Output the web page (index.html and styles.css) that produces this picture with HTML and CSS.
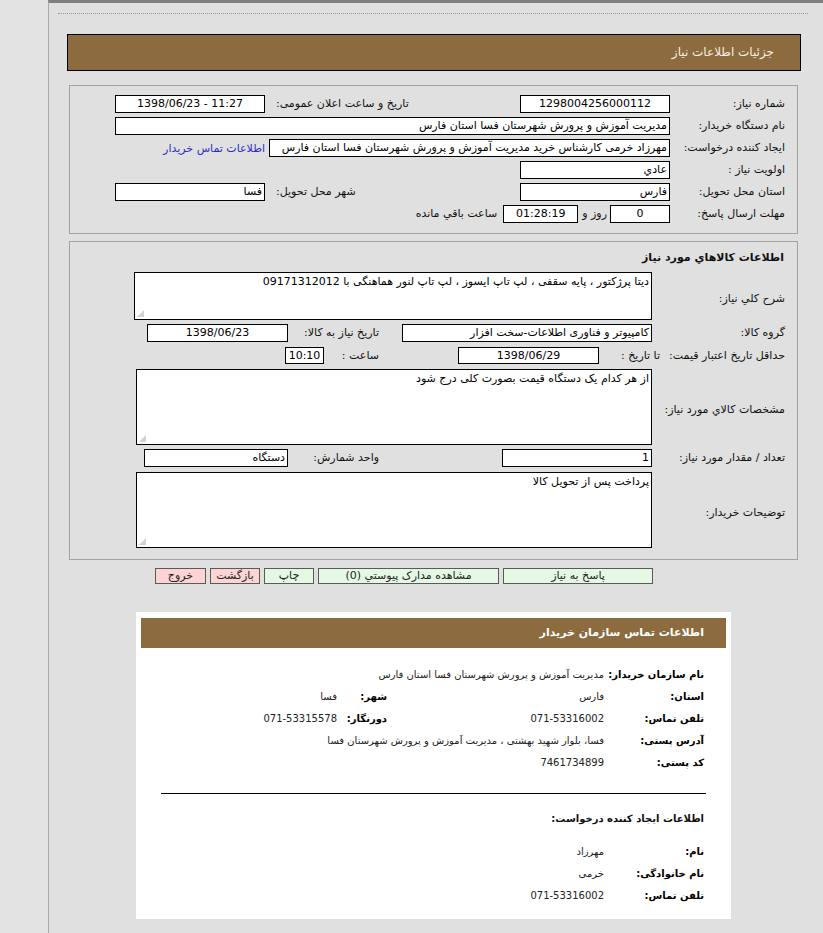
FILE: index.html
```html
<!DOCTYPE html>
<html lang="fa" dir="rtl">
<head>
<meta charset="utf-8">
<title>جزئیات اطلاعات نیاز</title>
<link rel="stylesheet" href="styles.css">
</head>
<body>
<div class="page">
  <div class="dots"></div>
  <div class="hdr">جزئیات اطلاعات نیاز</div>

  <div class="box box1">
    <div class="row">
      <span class="lbl c1">شماره نیاز:</span>
      <span class="inp w150 ctr">1298004256000112</span>
      <span class="lbl c3">تاریخ و ساعت اعلان عمومی:</span>
      <span class="inp w150 ctr ltr">1398/06/23 - 11:27</span>
    </div>
    <div class="row">
      <span class="lbl c1">نام دستگاه خریدار:</span>
      <span class="inp w555">مدیریت آموزش و پرورش شهرستان فسا استان فارس</span>
    </div>
    <div class="row">
      <span class="lbl c1">ایجاد کننده درخواست:</span>
      <span class="inp w401">مهرزاد خرمی کارشناس خرید مدیریت آموزش و پرورش شهرستان فسا استان فارس</span>
      <a class="link" href="#">اطلاعات تماس خریدار</a>
    </div>
    <div class="row">
      <span class="lbl c1">اولویت نیاز :</span>
      <span class="inp w150">عادي</span>
    </div>
    <div class="row">
      <span class="lbl c1">استان محل تحویل:</span>
      <span class="inp w150">فارس</span>
      <span class="lbl c3">شهر محل تحویل:</span>
      <span class="inp w150">فسا</span>
    </div>
    <div class="row">
      <span class="lbl c1">مهلت ارسال پاسخ:</span>
      <span class="inp w60 ctr">0</span>
      <span class="lbl t-day">روز و</span>
      <span class="inp w75 ctr">01:28:19</span>
      <span class="lbl t-rem">ساعت باقي مانده</span>
    </div>
  </div>

  <div class="box box2">
    <div class="title">اطلاعات کالاهاي مورد نیاز</div>
    <div class="row tall">
      <span class="lbl d1 mid">شرح کلي نیاز:</span>
      <div class="area w518 h48">دیتا پرژکتور ، پایه سقفی ، لپ تاپ ایسوز ، لپ تاپ لنور هماهنگی با 09171312012<span class="grip"></span></div>
    </div>
    <div class="row r18">
      <span class="lbl d1">گروه کالا:</span>
      <span class="d2"><span class="inp w250">کامپیوتر و فناوری اطلاعات-سخت افزار</span></span>
      <span class="lbl d3">تاریخ نیاز به کالا:</span>
      <span class="inp w141 ctr">1398/06/23</span>
    </div>
    <div class="row r17">
      <span class="lbl d1 pair"><span>حداقل تاریخ اعتبار قیمت:</span><span>تا تاریخ :</span></span>
      <span class="d2 off53"><span class="inp w141 h17 ctr">1398/06/29</span></span>
      <span class="lbl d3n">ساعت :</span>
      <span class="inp w39 h17 ctr">10:10</span>
    </div>
    <div class="row tall">
      <span class="lbl d1 mid">مشخصات کالاي مورد نیاز:</span>
      <div class="area w516 h76">از هر کدام یک دستگاه قیمت بصورت کلی درج شود<span class="grip"></span></div>
    </div>
    <div class="row r18">
      <span class="lbl d1">تعداد / مقدار مورد نیاز:</span>
      <span class="d2"><span class="inp w150">1</span></span>
      <span class="lbl d3">واحد شمارش:</span>
      <span class="inp w144">دستگاه</span>
    </div>
    <div class="row tall last">
      <span class="lbl d1 mid">توضیحات خریدار:</span>
      <div class="area w516 h76">پرداخت پس از تحویل کالا<span class="grip"></span></div>
    </div>
  </div>

  <div class="buttons">
    <span class="btn green w150">پاسخ به نیاز</span>
    <span class="btn green w181">مشاهده مدارک پیوستي (0)</span>
    <span class="btn green w50">چاپ</span>
    <span class="btn pink w50">بازگشت</span>
    <span class="btn pink w51">خروج</span>
  </div>

  <div class="card">
    <div class="card-hdr">اطلاعات تماس سازمان خریدار</div>
    <div class="crow first">
      <span class="clbl">نام سازمان خریدار:</span>
      <span class="cval">مدیریت آموزش و پرورش شهرستان فسا استان فارس</span>
    </div>
    <div class="crow">
      <span class="clbl">استان:</span>
      <span class="cval v1">فارس</span>
      <span class="clbl l2">شهر:</span>
      <span class="cval">فسا</span>
    </div>
    <div class="crow">
      <span class="clbl">تلفن تماس:</span>
      <span class="cval v1">071-53316002</span>
      <span class="clbl l2">دورنگار:</span>
      <span class="cval">071-53315578</span>
    </div>
    <div class="crow">
      <span class="clbl">آدرس پستی:</span>
      <span class="cval">فسا، بلوار شهید بهشتی ، مدیریت آموزش و پرورش شهرستان فسا</span>
    </div>
    <div class="crow">
      <span class="clbl">کد پستی:</span>
      <span class="cval">7461734899</span>
    </div>
    <div class="sep"></div>
    <div class="csub">اطلاعات ایجاد کننده درخواست:</div>
    <div class="crow first2">
      <span class="clbl">نام:</span>
      <span class="cval">مهرزاد</span>
    </div>
    <div class="crow">
      <span class="clbl">نام خانوادگی:</span>
      <span class="cval">خرمی</span>
    </div>
    <div class="crow">
      <span class="clbl">تلفن تماس:</span>
      <span class="cval">071-53316002</span>
    </div>
  </div>
</div>
</body>
</html>
```
FILE: styles.css
```css
* { box-sizing: border-box; }
html, body { margin: 0; padding: 0; }
body {
  background: #e3e3e3;
  font-family: Tahoma, "DejaVu Sans", sans-serif;
  font-size: 11px;
  color: #111;
}
.page {
  margin-left: 48px;
  min-height: 933px;
  background: #e0e0e0;
  border-left: 1px solid #a8a8a8;
  border-top: 3px solid #808080;
  padding-top: 10px;
  overflow: hidden;
}
.dots {
  height: 1px;
  margin: 0 15px 0 9px;
  border-top: 1px dotted #9a9a9a;
}
.hdr {
  margin: 20px 22px 0 18px;
  height: 37px;
  background: #8c6b3f;
  border: 1px solid #000;
  color: #f6efe0;
  font-size: 12px;
  line-height: 35px;
  padding-right: 26px;
}
.box {
  margin: 14px 25px 0 20px;
  border: 1px solid #a2a2a2;
  padding-right: 12px;
}
.box1 { padding-top: 9px; padding-bottom: 10px; }
.box2 { margin-top: 7px; padding-top: 7px; padding-bottom: 11px; }

.row {
  display: flex;
  align-items: center;
  height: 18px;
  margin-bottom: 4px;
  white-space: nowrap;
}
.row:last-child { margin-bottom: 0; }
.lbl { color: #111; line-height: 18px; }
.c1 { width: 115px; flex: none; }
.c3 { width: 255px; flex: none; text-align: left; padding-left: 11px; }
.t-day { margin: 0 3px 0 4px; }
.t-rem { margin-right: 6px; }

.inp {
  display: block;
  flex: none;
  height: 18px;
  line-height: 16px;
  border: 1px solid #000;
  background: #fff;
  color: #000;
  padding: 0 2px;
  overflow: hidden;
  white-space: nowrap;
  font-size: 11px;
}
.ctr { text-align: center; }
.ltr { direction: ltr; }
.w39 { width: 39px; }
.w50 { width: 50px; }
.w51 { width: 51px; }
.w60 { width: 60px; }
.w75 { width: 75px; }
.w141 { width: 141px; }
.w144 { width: 144px; }
.w150 { width: 150px; }
.w181 { width: 181px; }
.w250 { width: 250px; }
.w401 { width: 401px; }
.w555 { width: 555px; }
.h17 { height: 17px; line-height: 15px; }

.link {
  color: #2b2bcc;
  text-decoration: none;
  margin-right: 4px;
}

.title {
  font-weight: bold;
  font-size: 11px;
  height: 18px;
  line-height: 18px;
  margin-bottom: 5px;
  padding-right: 1px;
}
.row.tall { height: auto; align-items: center; }
.row.r18 { height: 18px; margin-bottom: 5px; }
.row.r17 { height: 17px; margin-bottom: 5px; }
.d1 { width: 133px; flex: none; }
.d2 { width: 273px; flex: none; display: flex; }
.off53 { padding-right: 53px; }
.d3 { width: 91px; flex: none; }
.d3n { width: 55px; flex: none; }
.pair { display: flex; gap: 9px; }
.mid { padding-top: 6px; }

.area {
  position: relative;
  flex: none;
  background: #fff;
  border: 1px solid #000;
  padding: 1px 2px;
  line-height: 15px;
  color: #000;
  white-space: normal;
}
.w518 { width: 518px; }
.w516 { width: 516px; }
.h48 { height: 48px; }
.h76 { height: 76px; }
.grip {
  position: absolute;
  left: 2px;
  bottom: 2px;
  width: 7px;
  height: 7px;
  background-image: radial-gradient(circle, #b8b8b8 0.6px, transparent 0.9px);
  background-size: 2px 2px;
  clip-path: polygon(100% 0, 100% 100%, 0 100%);
}
.box2 .row.tall { margin-bottom: 4px; }
.box2 .row.tall.last { margin-bottom: 0; }

.buttons {
  display: flex;
  gap: 4px;
  margin-top: 8px;
  padding-right: 170px;
}
.btn {
  display: block;
  height: 16px;
  line-height: 14px;
  text-align: center;
  border: 1px solid #5a5a5a;
  color: #222;
  font-size: 11px;
}
.green { background: #e4f9e4; }
.pink { background: #fdd4d4; }

.card {
  width: 595px;
  margin: 28px 92px 0 0;
  background: #fff;
  padding: 6px 5px 13px 5px;
}
.card-hdr {
  height: 30px;
  background: #8c6b3f;
  color: #fff;
  font-weight: bold;
  font-size: 11px;
  line-height: 30px;
  padding-right: 22px;
}
.crow {
  display: flex;
  align-items: center;
  height: 22px;
  padding-right: 22px;
  white-space: nowrap;
}
.crow.first { margin-top: 15px; }
.crow.first2 { margin-top: 10px; }
.clbl {
  width: 100px;
  flex: none;
  font-weight: bold;
  font-size: 10px;
  color: #000;
}
.cval {
  font-size: 10px;
  color: #222;
}
.v1 { width: 217px; flex: none; }
.l2 { width: 50px; }
.sep {
  height: 1px;
  background: #000;
  margin: 20px 20px 0 20px;
}
.csub {
  height: 22px;
  line-height: 22px;
  margin-top: 14px;
  padding-right: 22px;
  font-weight: bold;
  font-size: 10px;
}
```
